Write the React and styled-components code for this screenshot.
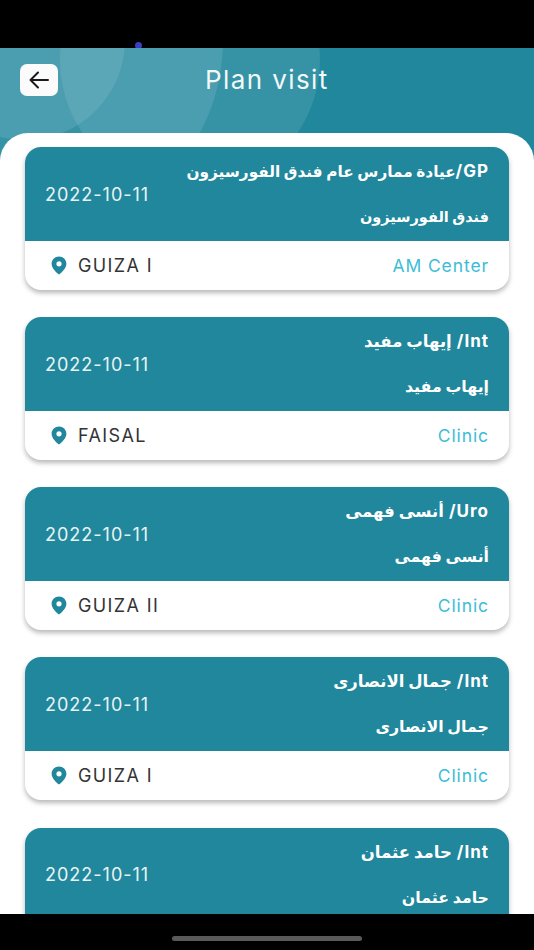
import React from 'react';
import styled, { createGlobalStyle } from 'styled-components';

const GlobalStyle = createGlobalStyle`
    html, body {
        margin: 0;
        padding: 0;
        background: #000;
    }
    body {
        font-family: Inter, "Liberation Sans", sans-serif;
    }
`;

const Screen = styled.div`
    width: 534px;
    height: 950px;
    display: flex;
    flex-direction: column;
    background: #000;
    overflow: hidden;
`;

const StatusBar = styled.div`
    height: 48px;
    flex-shrink: 0;
    position: relative;
    background: #000;
`;

const CameraDot = styled.span`
    position: absolute;
    left: 135px;
    top: 42px;
    width: 7px;
    height: 7px;
    border-radius: 50%;
    background: #3a3fc0;
`;

const Main = styled.div`
    flex: 1;
    min-height: 0;
    display: flex;
    flex-direction: column;
    position: relative;
    overflow: hidden;
    background: #20879c;
`;

const Bubble = styled.span`
    position: absolute;
    border-radius: 50%;
    background: rgba(255, 255, 255, 0.1);
    left: ${(props) => props.$x - props.$r}px;
    top: ${(props) => props.$y - props.$r}px;
    width: ${(props) => props.$r * 2}px;
    height: ${(props) => props.$r * 2}px;
`;

const Header = styled.header`
    height: 85px;
    flex-shrink: 0;
    position: relative;
    display: flex;
    align-items: flex-start;
    padding: 16px 0 0 20px;
    box-sizing: border-box;
`;

const BackButton = styled.button`
    width: 38px;
    height: 32px;
    border: none;
    padding: 0;
    border-radius: 7px;
    background: #fbfbfb;
    display: flex;
    align-items: center;
    justify-content: center;
`;

const Title = styled.h1`
    margin: 0 0 0 147px;
    font-size: 26px;
    line-height: 32px;
    font-weight: 400;
    letter-spacing: 1.4px;
    color: #f2f8f9;
`;

const Sheet = styled.div`
    flex: 1;
    min-height: 0;
    position: relative;
    background: #fff;
    border-radius: 28px 28px 0 0;
    padding: 14px 25px 0;
    display: flex;
    flex-direction: column;
    gap: 27.15px;
`;

const Card = styled.article`
    flex-shrink: 0;
    height: 143px;
    border-radius: 16px;
    background: #fff;
    box-shadow: 0 3px 5px rgba(0, 0, 0, 0.28);
    display: flex;
    flex-direction: column;
    overflow: hidden;
`;

const CardTop = styled.div`
    height: 94px;
    flex-shrink: 0;
    background: #20879c;
    display: flex;
    align-items: center;
    justify-content: space-between;
    padding: 0 20px;
`;

const DateText = styled.span`
    font-size: 18px;
    letter-spacing: 1px;
    color: #e9f3f5;
    white-space: nowrap;
`;

const Names = styled.div`
    display: flex;
    flex-direction: column;
    gap: 22px;
    direction: rtl;
    text-align: right;
    color: #fff;
    font-family: Inter, "DejaVu Sans", sans-serif;
    line-height: 23px;
    font-weight: 700;
    white-space: nowrap;
`;

const VisitTitle = styled.div`
    font-size: ${(props) => (props.$long ? '15.3px' : '16.5px')};
`;

const Specialty = styled.span`
    font-size: 17px;
    letter-spacing: 1px;
`;

const VisitSub = styled.div`
    font-size: ${(props) => (props.$long ? '14.5px' : '15.8px')};
`;

const CardBottom = styled.div`
    flex: 1;
    display: flex;
    align-items: center;
    justify-content: space-between;
    padding: 0 20px 0 26px;
`;

const Place = styled.div`
    display: flex;
    align-items: center;
    gap: 11px;
    font-size: 18px;
    letter-spacing: 1.4px;
    color: #333;
`;

const Kind = styled.span`
    font-size: 17.5px;
    letter-spacing: 0.9px;
    color: #3cbdd6;
`;

const NavBar = styled.div`
    height: 36px;
    flex-shrink: 0;
    position: relative;
    background: #000;
`;

const HomeBar = styled.span`
    position: absolute;
    left: 172px;
    top: 22px;
    width: 190px;
    height: 5px;
    border-radius: 3px;
    background: #5a5a5a;
`;

const visits = [
    { specialty: 'GP/', title: 'عيادة ممارس عام فندق الفورسيزون', sub: 'فندق الفورسيزون', area: 'GUIZA I', kind: 'AM Center', long: true },
    { specialty: 'Int/ ', title: 'إيهاب مفيد', sub: 'إيهاب مفيد', area: 'FAISAL', kind: 'Clinic' },
    { specialty: 'Uro/ ', title: 'أنسى فهمى', sub: 'أنسى فهمى', area: 'GUIZA II', kind: 'Clinic' },
    { specialty: 'Int/ ', title: 'جمال الانصارى', sub: 'جمال الانصارى', area: 'GUIZA I', kind: 'Clinic' },
    { specialty: 'Int/ ', title: 'حامد عثمان', sub: 'حامد عثمان', area: 'GUIZA I', kind: 'Clinic' },
];

const BackIcon = () => (
    <svg width="22" height="20" viewBox="0 0 22 20" fill="none" stroke="#1a1a1a" strokeWidth="2" strokeLinecap="round" strokeLinejoin="round">
        <path d="M20 10H2.5M10 2.5L2.5 10L10 17.5" />
    </svg>
);

const PinIcon = () => (
    <svg width="16" height="19" viewBox="0 0 16 19">
        <path
            fill="#20879c"
            fillRule="evenodd"
            d="M8 0.5C3.9 0.5 0.6 3.7 0.6 7.8C0.6 12.4 5.4 16.6 8 18.5C10.6 16.6 15.4 12.4 15.4 7.8C15.4 3.7 12.1 0.5 8 0.5ZM8 5.2A2.6 2.6 0 1 1 8 10.4A2.6 2.6 0 1 1 8 5.2Z"
        />
    </svg>
);

const VisitCard = ({ visit }) => (
    <Card>
        <CardTop>
            <DateText>2022-10-11</DateText>
            <Names>
                <VisitTitle $long={visit.long}>
                    <Specialty>{visit.specialty}</Specialty>
                    {visit.title}
                </VisitTitle>
                <VisitSub $long={visit.long}>{visit.sub}</VisitSub>
            </Names>
        </CardTop>
        <CardBottom>
            <Place>
                <PinIcon />
                {visit.area}
            </Place>
            <Kind>{visit.kind}</Kind>
        </CardBottom>
    </Card>
);

const App = () => (
    <Screen>
        <GlobalStyle />
        <StatusBar>
            <CameraDot />
        </StatusBar>
        <Main>
            <Bubble $x={25} $y={-8} $r={100} />
            <Bubble $x={25} $y={-8} $r={198} />
            <Bubble $x={190} $y={12} $r={130} />
            <Header>
                <BackButton aria-label="Back">
                    <BackIcon />
                </BackButton>
                <Title>Plan visit</Title>
            </Header>
            <Sheet>
                {visits.map((visit, i) => (
                    <VisitCard key={i} visit={visit} />
                ))}
            </Sheet>
        </Main>
        <NavBar>
            <HomeBar />
        </NavBar>
    </Screen>
);

export default App;
